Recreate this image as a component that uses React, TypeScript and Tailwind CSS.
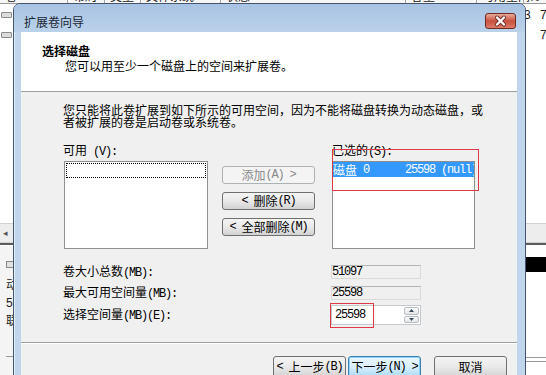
import type { ReactNode } from "react";

// the dialog draws its half-width characters narrow (SimSun style), so latin bits get their own span
function A({ children }: { children: ReactNode }) {
  return (
    <span className="whitespace-pre font-['Liberation_Mono',monospace] tracking-[-1.2px]">
      {children}
    </span>
  );
}

function SideButton({ children, disabled }: { children: ReactNode; disabled?: boolean }) {
  return (
    <div
      className={`flex h-[18px] w-[93px] items-center justify-center rounded-[3px] border ${
        disabled
          ? "border-[#adb2b5] bg-[#f4f4f4] text-[#8a8a8a]"
          : "border-[#707070] bg-gradient-to-b from-[#f4f4f4] via-[#e9e9e9] to-[#d2d2d2]"
      }`}
    >
      {children}
    </div>
  );
}

function Backdrop() {
  const head = "h-[12px] shrink-0 border-r border-[#a5a5a5] pl-[5px] whitespace-nowrap";
  return (
    <div className="flex h-full flex-col font-['Liberation_Sans','Noto_Sans_CJK_SC',sans-serif] text-[12px] leading-[12px] text-[#222]">
      {/* column header of the volume list, only its lower edge shows */}
      <div className="flex h-[4px] items-end overflow-hidden border-b border-[#9a9a9a] bg-[#f6f6f6]">
        <div className={`${head} w-[68px]`}>卷</div>
        <div className={`${head} w-[37px]`}>布局</div>
        <div className={`${head} w-[36px]`}>类型</div>
        <div className={`${head} w-[80px]`}>文件系统</div>
        <div className={`${head} w-[185px]`}>状态</div>
        <div className={`${head} w-[71px]`}>容量</div>
        <div className={`${head} w-[47px]`}>可用空间</div>
        <div className={`${head} w-[60px]`}>% 可用</div>
      </div>

      <div className="flex h-[219px] flex-col pt-[1px]">
        <div className="flex h-[20px] items-center">
          <span className="ml-[1px] h-[6px] w-[11px] rounded-[1px] border border-[#8a8a8a] bg-[#dcdcdc]" />
          <div className="ml-auto flex w-[22px] shrink-0 whitespace-nowrap">
            <span className="w-[16px] shrink-0">3</span>
            <span className="shrink-0">75 %</span>
          </div>
        </div>
        <div className="flex h-[20px] items-center">
          <span className="ml-[1px] h-[6px] w-[11px] rounded-[1px] border border-[#8a8a8a] bg-[#dcdcdc]" />
          <div className="ml-auto w-[6px] shrink-0 whitespace-nowrap">75 %</div>
        </div>
      </div>

      <div className="flex h-[20px] items-center border-y border-[#d2d2d2] bg-[#ededed] pl-[3px] text-[9px] text-[#555]">
        ◂
      </div>
      <div className="h-[3px] border-t-2 border-[#5c5c5c] bg-white" />

      <div className="flex flex-1">
        <div className="flex w-[120px] flex-col bg-[#f4f4f4] pl-[6px] pt-[15px] leading-[18px]">
          <span className="h-[7px] w-[12px] border border-[#888] bg-[#e2e2e2]" />
          <div className="mt-[8px]">动态</div>
          <div>50.00 GB</div>
          <div>联机</div>
          <div className="mt-[26px] border-t border-[#9a9a9a]" />
        </div>
        <div className="ml-auto flex w-[20px] flex-col pt-[11px]">
          <div className="h-[15px] bg-black" />
          <div className="mt-[85px] h-[5px] border-y border-[#9a9a9a]" />
        </div>
      </div>
    </div>
  );
}

function Dialog() {
  return (
    <div className="absolute left-[13px] top-[3px] flex h-[380px] w-[513px] flex-col rounded-t-[7px] border border-[#44566d] bg-[#c1d6ed] pl-[7px] pr-[8px] shadow-[inset_1px_1px_0_#e4eef9]">
      {/* title bar */}
      <div className="-mx-[7px] -mr-[8px] flex h-[28px] items-start rounded-t-[6px] bg-gradient-to-b from-[#a8c3e3] to-[#bad1ea] pl-[10px] pr-[9px]">
        <div className="mt-[12px] text-[#1c2634]">扩展卷向导</div>
        <div className="ml-auto mt-[9px] h-[16px] w-[31px] overflow-hidden rounded-[3px] border border-[#6f2b23] bg-gradient-to-b from-[#e8ab9b] via-[#c9503f] to-[#dc7c69]">
          <svg viewBox="0 0 29 14" className="h-full w-full">
            <path d="M11 3.5 L18 10.5 M18 3.5 L11 10.5" stroke="#6b2a22" strokeWidth="4" strokeLinecap="round" />
            <path d="M11 3.5 L18 10.5 M18 3.5 L11 10.5" stroke="#ffffff" strokeWidth="2.4" strokeLinecap="round" />
          </svg>
        </div>
      </div>

      <div className="flex flex-1 flex-col bg-[#f0f0f0]">
        {/* header */}
        <div className="h-[60px] shrink-0 border-b border-[#a0a0a0] bg-white pl-[21px] pt-[13px]">
          <div className="font-bold">选择磁盘</div>
          <div className="ml-[23px] mt-[3px]">您可以用至少一个磁盘上的空间来扩展卷。</div>
        </div>

        {/* body */}
        <div className="h-[250px] shrink-0 pl-[42px] pt-[12px]">
          <p className="whitespace-nowrap">
            您只能将此卷扩展到如下所示的可用空间，因为不能将磁盘转换为动态磁盘，或
            <br />
            者被扩展的卷是启动卷或系统卷。
          </p>

          <div className="mt-[16px] flex">
            <div className="flex flex-col">
              <div>
                可用<A> (V):</A>
              </div>
              <div className="ml-[1px] mt-[3px] h-[88px] w-[144px] border border-[#8e8f8f] bg-white p-[1px]">
                <div className="h-[15px] border border-dotted border-black" />
              </div>
            </div>

            <div className="ml-[14px] flex flex-col gap-[8px] pt-[22px]">
              <SideButton disabled>
                添加<A>(A) &gt;</A>
              </SideButton>
              <SideButton>
                <A>&lt; </A>删除<A>(R)</A>
              </SideButton>
              <SideButton>
                <A>&lt; </A>全部删除<A>(M)</A>
              </SideButton>
            </div>

            <div className="relative ml-[17px] flex flex-col">
              <div>
                已选的<A>(S):</A>
              </div>
              <div className="mt-[3px] h-[88px] w-[143px] overflow-hidden border border-[#8e8f8f] bg-white">
                <div className="flex h-[15px] items-center whitespace-nowrap bg-[#3399ff] text-white">
                  磁盘<A> 0      25598 (null)</A>
                </div>
              </div>
              <div className="absolute left-0 top-[5px] h-[42px] w-[147px] border border-[#dc3a44]" />
            </div>
          </div>

          <div className="mt-[16px] flex items-center">
            <div className="w-[268px]">
              卷大小总数<A>(MB):</A>
            </div>
            <div className="flex h-[14px] w-[90px] items-center border border-[#dadada] border-t-[#b4b4b4]">
              <A>51097</A>
            </div>
          </div>
          <div className="mt-[7px] flex items-center">
            <div className="w-[268px]">
              最大可用空间量<A>(MB):</A>
            </div>
            <div className="flex h-[14px] w-[90px] items-center border border-[#dadada] border-t-[#b4b4b4]">
              <A>25598</A>
            </div>
          </div>
          <div className="mt-[5px] flex items-center">
            <div className="w-[268px]">
              选择空间量<A>(MB)(E):</A>
            </div>
            <div className="relative flex h-[20px] w-[90px] items-center border border-[#c5c8cc] bg-white pl-[3px]">
              <A>25598</A>
              <div className="ml-auto mr-[1px] flex h-[16px] w-[15px] flex-col gap-[1px]">
                <div className="flex flex-1 items-center justify-center rounded-[2px] border border-[#b9bdc3] bg-gradient-to-b from-[#fafafa] to-[#e3e5e8]">
                  <svg viewBox="0 0 5 3" className="h-[3px] w-[5px]">
                    <path d="M0 3 L2.5 0 L5 3 Z" fill="#3c4a5e" />
                  </svg>
                </div>
                <div className="flex flex-1 items-center justify-center rounded-[2px] border border-[#b9bdc3] bg-gradient-to-b from-[#fafafa] to-[#e3e5e8]">
                  <svg viewBox="0 0 5 3" className="h-[3px] w-[5px]">
                    <path d="M0 0 L5 0 L2.5 3 Z" fill="#3c4a5e" />
                  </svg>
                </div>
              </div>
              <div className="absolute -left-[2px] -top-[3px] h-[25px] w-[44px] border border-[#dc3a44]" />
            </div>
          </div>
        </div>

        {/* buttons */}
        <div className="flex flex-1 justify-end border-t border-[#a0a0a0] pr-[10px] pt-[13px] shadow-[inset_0_1px_0_#ffffff]">
          <div className="flex h-[22px] w-[73px] items-center justify-center rounded-[3px] border border-[#707070] bg-gradient-to-b from-[#f4f4f4] via-[#e9e9e9] to-[#d2d2d2]">
            <A>&lt; </A>上一步<A>(B)</A>
          </div>
          <div className="ml-[2px] flex h-[22px] w-[73px] items-center justify-center rounded-[3px] border border-[#3c7fb1] bg-gradient-to-b from-[#eaf6fd] via-[#d9f0fc] to-[#a9daf5] shadow-[inset_0_0_0_1px_#8fd4f6]">
            下一步<A>(N) &gt;</A>
          </div>
          <div className="ml-[13px] flex h-[22px] w-[73px] items-center justify-center rounded-[3px] border border-[#707070] bg-gradient-to-b from-[#f4f4f4] via-[#e9e9e9] to-[#d2d2d2]">
            取消
          </div>
        </div>
      </div>
    </div>
  );
}

export default function App() {
  return (
    <div className="relative h-[375px] w-[546px] overflow-hidden bg-white font-['Noto_Sans_CJK_SC',sans-serif] text-[12px] leading-[12px] text-black">
      <Backdrop />
      <Dialog />
    </div>
  );
}
